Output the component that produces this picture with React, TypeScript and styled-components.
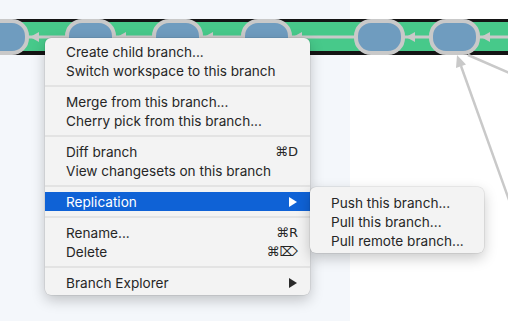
import React from "react";
import styled, { createGlobalStyle } from "styled-components";

const GlobalStyle = createGlobalStyle`
  html, body {
    margin: 0;
    padding: 0;
    background: #ffffff;
  }
  body {
    font-family: Inter, "Liberation Sans", "DejaVu Sans", sans-serif;
    -webkit-font-smoothing: antialiased;
  }
`;

const Canvas = styled.div`
  position: relative;
  width: 508px;
  height: 321px;
  overflow: hidden;
`;

const Backdrop = styled.div`
  display: flex;
  height: 100%;
`;

const Pane = styled.div<{ $tint?: boolean; $width?: number }>`
  flex: ${(p) => (p.$width ? `0 0 ${p.$width}px` : "1")};
  background: ${(p) => (p.$tint ? "#f4f7fb" : "#ffffff")};
`;

const Graph = styled.svg`
  position: absolute;
  left: 0;
  top: 0;
`;

const Menu = styled.div<{ $left: number; $top: number; $width: number; $padTop: number }>`
  position: absolute;
  left: ${(p) => p.$left}px;
  top: ${(p) => p.$top}px;
  width: ${(p) => p.$width}px;
  box-sizing: border-box;
  padding: ${(p) => p.$padTop}px 0 3px;
  background: #f3f3f3;
  border-radius: 6px;
  box-shadow: 0 0 0 0.5px rgba(0, 0, 0, 0.12), 0 5px 14px rgba(0, 0, 0, 0.22);
  display: flex;
  flex-direction: column;
`;

const Item = styled.div<{ $active?: boolean }>`
  display: flex;
  align-items: center;
  justify-content: space-between;
  height: 19px;
  padding: 0 12px 0 21px;
  font-size: 13.6px;
  color: ${(p) => (p.$active ? "#ffffff" : "#262626")};
  background: ${(p) => (p.$active ? "#0f62d6" : "transparent")};
  white-space: nowrap;
`;

const Shortcut = styled.span`
  font-family: "DejaVu Sans", Inter, sans-serif;
  font-size: 13px;
  color: #262626;
`;

const Caret = styled.span<{ $light?: boolean }>`
  width: 0;
  height: 0;
  margin-right: 1px;
  border-top: 5px solid transparent;
  border-bottom: 5px solid transparent;
  border-left: 8px solid ${(p) => (p.$light ? "#ffffff" : "#2a2a2a")};
`;

const Separator = styled.div`
  height: 12px;
  display: flex;
  align-items: center;

  &::after {
    content: "";
    flex: 1;
    height: 2px;
    background: #e3e3e3;
  }
`;

type Entry = { label: string; shortcut?: string; sub?: boolean; active?: boolean };

const groups: Entry[][] = [
  [{ label: "Create child branch..." }, { label: "Switch workspace to this branch" }],
  [{ label: "Merge from this branch..." }, { label: "Cherry pick from this branch..." }],
  [{ label: "Diff branch", shortcut: "⌘D" }, { label: "View changesets on this branch" }],
  [{ label: "Replication", sub: true, active: true }],
  [
    { label: "Rename...", shortcut: "⌘R" },
    { label: "Delete", shortcut: "⌘⌦" },
  ],
  [{ label: "Branch Explorer", sub: true }],
];

const replication = ["Push this branch...", "Pull this branch...", "Pull remote branch..."];

const nodes = [-20, 67, 154, 243, 356, 431];
const NODE_W = 47;

function BranchGraph() {
  return (
    <Graph width={508} height={321} viewBox="0 0 508 321">
      <rect x={0} y={19} width={508} height={36} fill="#141414" />
      <rect x={0} y={22} width={508} height={29} fill="#47c98a" />
      <line x1={0} y1={37} x2={508} y2={37} stroke="#c9c9c9" strokeWidth={3} />
      <line x1={461} y1={66} x2={518} y2={225} stroke="#c9c9c9" strokeWidth={2.5} />
      <polygon points="457,55 456,68 466,64.5" fill="#c9c9c9" />
      <line x1={468} y1={55} x2={512} y2={74} stroke="#c9c9c9" strokeWidth={2.5} />
      {nodes.map((x) => (
        <g key={x}>
          <rect
            x={x}
            y={21}
            width={NODE_W}
            height={32}
            rx={15}
            fill="#6f9cbf"
            stroke="#c9c9c9"
            strokeWidth={4}
          />
          <polygon
            points={`${x + NODE_W + 3},37 ${x + NODE_W + 12},32 ${x + NODE_W + 12},42`}
            fill="#c9c9c9"
          />
        </g>
      ))}
    </Graph>
  );
}

function App() {
  return (
    <>
      <GlobalStyle />
      <Canvas>
        <Backdrop>
          <Pane $tint $width={350} />
          <Pane />
        </Backdrop>
        <BranchGraph />
        <Menu $left={45} $top={38} $width={265} $padTop={4}>
          {groups.map((group, gi) => (
            <React.Fragment key={gi}>
              {gi > 0 && <Separator />}
              {group.map((entry) => (
                <Item key={entry.label} $active={entry.active}>
                  <span>{entry.label}</span>
                  {entry.shortcut && <Shortcut>{entry.shortcut}</Shortcut>}
                  {entry.sub && <Caret $light={entry.active} />}
                </Item>
              ))}
            </React.Fragment>
          ))}
        </Menu>
        <Menu $left={310} $top={187} $width={174} $padTop={6}>
          {replication.map((label) => (
            <Item key={label}>{label}</Item>
          ))}
        </Menu>
      </Canvas>
    </>
  );
}

export default App;
